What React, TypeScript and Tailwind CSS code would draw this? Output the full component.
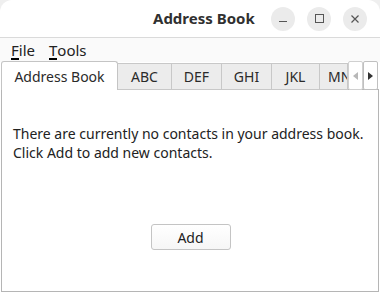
import React from 'react';

const tabs = ['ABC', 'DEF', 'GHI', 'JKL'];

export default function App() {
  const font = { fontFamily: '"Noto Sans", "DejaVu Sans", sans-serif' };

  return (
    <div className="w-[380px] h-[294px] bg-[#efefef] flex flex-col text-[#2a2a2a]" style={font}>
      {/* Title bar */}
      <div className="h-[38px] bg-white rounded-t-[12px] border-b border-[#dadada] flex items-center shrink-0">
        <div className="w-[153px]" />
        <div className="text-[15px] font-bold text-[#303030] w-[112px]">Address Book</div>
        <div className="flex items-center gap-[12px] ml-[6px]">
          <button className="w-[24px] h-[24px] rounded-full bg-[#ebebeb] flex items-center justify-center">
            <span className="block w-[8px] h-px bg-[#555] mt-[5px]" />
          </button>
          <button className="w-[24px] h-[24px] rounded-full bg-[#ebebeb] flex items-center justify-center">
            <span className="block w-[9px] h-[9px] border border-[#555]" />
          </button>
          <button className="w-[24px] h-[24px] rounded-full bg-[#ebebeb] flex items-center justify-center">
            <svg width="10" height="10" viewBox="0 0 10 10">
              <path d="M1.5 1.5 L8.5 8.5 M8.5 1.5 L1.5 8.5" stroke="#555" strokeWidth="1.2" />
            </svg>
          </button>
        </div>
      </div>

      {/* Menu bar */}
      <div className="h-[24px] bg-[#fafafa] flex items-center text-[15px] text-[#222] shrink-0 pl-[11px] gap-[14px]">
        <span>
          <span className="border-b-2 border-black leading-[15px] inline-block">F</span>ile
        </span>
        <span>
          <span className="border-b-2 border-black leading-[15px] inline-block">T</span>ools
        </span>
      </div>

      {/* Tab row + pane */}
      <div className="flex-1 flex flex-col bg-white pl-[1px] pr-[1px] pb-[2px]">
        <div className="h-[28px] flex items-end shrink-0 relative z-10 -mb-px">
          <div className="w-[117px] h-[29px] bg-white border border-b-0 border-[#c4c4c4] rounded-t-[3px] flex items-center justify-center text-[14px]">
            Address Book
          </div>
          {tabs.map((t) => (
            <div
              key={t}
              className={`h-[27px] bg-[#ececec] border border-l-0 border-[#c8c8c8] flex items-center justify-center text-[14px] ${
                t === 'ABC' ? 'w-[54px]' : t === 'JKL' ? 'w-[48px]' : 'w-[50px]'
              }`}
            >
              {t}
            </div>
          ))}
          <div className="w-[28px] h-[27px] bg-[#ececec] border border-l-0 border-[#c8c8c8] overflow-hidden flex items-center pl-[8px] text-[14px] whitespace-nowrap">
            MNO
          </div>
          <div className="w-[15px] h-[29px] bg-white border border-[#d0d0d0] rounded-[2px] flex items-center justify-center">
            <svg width="5" height="8" viewBox="0 0 5 8">
              <path d="M5 0 L0 4 L5 8 Z" fill="#b8b8b8" />
            </svg>
          </div>
          <div className="w-[15px] h-[29px] bg-white border border-[#c0c0c0] rounded-[2px] flex items-center justify-center">
            <svg width="5" height="8" viewBox="0 0 5 8">
              <path d="M0 0 L5 4 L0 8 Z" fill="#333" />
            </svg>
          </div>
        </div>
        <div className="flex-1 border border-[#b5b5b5] bg-white flex flex-col">
          <div className="text-[14px] leading-[19px] text-[#222] pl-[11px] pt-[34px]">
            <div>There are currently no contacts in your address book.</div>
            <div>Click Add to add new contacts.</div>
          </div>
          <div className="flex justify-center mt-[62px] pl-[1px]">
            <button className="w-[80px] h-[26px] border border-[#c4c4c4] rounded-[3px] bg-gradient-to-b from-white to-[#f6f6f6] text-[14px] text-[#222] flex items-center justify-center">
              Add
            </button>
          </div>
        </div>
      </div>
    </div>
  );
}
